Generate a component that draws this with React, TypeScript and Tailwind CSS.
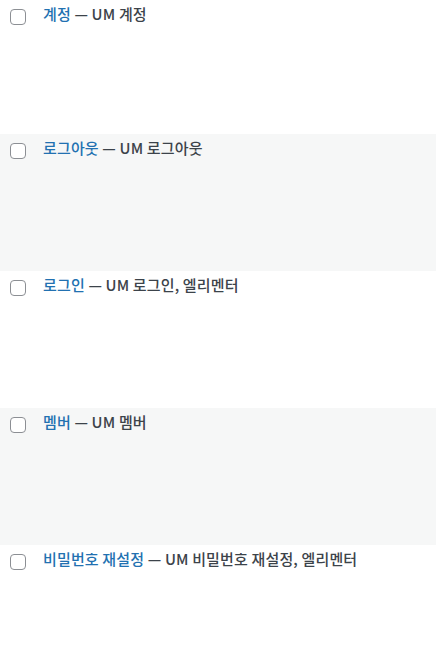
import React from 'react';

const rows = [
  { title: '계정', state: 'UM 계정' },
  { title: '로그아웃', state: 'UM 로그아웃' },
  { title: '로그인', state: 'UM 로그인, 엘리멘터' },
  { title: '멤버', state: 'UM 멤버' },
  { title: '비밀번호 재설정', state: 'UM 비밀번호 재설정, 엘리멘터' },
];

export default function App() {
  return (
    <div
      className="w-[436px] h-[665px] overflow-hidden bg-white"
      style={{ fontFamily: '"Noto Sans CJK KR", "Noto Sans", sans-serif' }}
    >
      {rows.map((row, i) => (
        <div
          key={row.title}
          className={`flex ${i === 0 ? 'h-[134px]' : 'h-[137px]'} ${i % 2 === 1 ? 'bg-[#f6f7f7]' : 'bg-white'}`}
        >
          <div className="w-[43px] shrink-0 pl-[10px] pt-[9px]">
            <span className="block w-4 h-4 rounded-[4px] border border-[#8c8f94] bg-white" />
          </div>
          <div className="pt-[3px] text-[15px] leading-[22px] font-medium tracking-[0.15px] text-[#3c434a]">
            <span className="text-[#2271b1]">{row.title}</span> — <span>{row.state}</span>
          </div>
        </div>
      ))}
    </div>
  );
}
